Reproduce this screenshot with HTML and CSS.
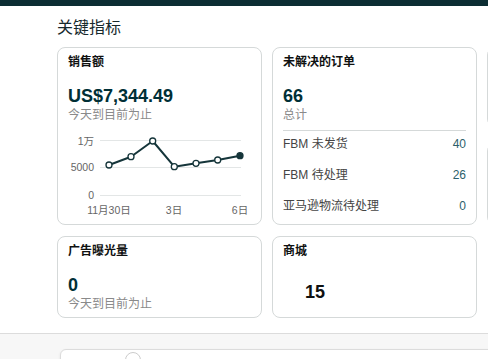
FILE: index.html
```html
<!DOCTYPE html>
<html lang="zh-CN">
<head>
    <meta charset="UTF-8">
    <meta name="viewport" content="width=device-width, initial-scale=1.0">
    <title>关键指标</title>
    <link rel="stylesheet" href="styles.css">
</head>
<body>
    <div class="topbar"></div>

    <section class="metrics">
        <h2 class="metrics-title">关键指标</h2>

        <div class="grid">
            <div class="card">
                <div class="card-title">销售额</div>
                <div class="value">US$7,344.49</div>
                <div class="sub">今天到目前为止</div>
                <svg class="chart" width="183" height="88" viewBox="-1 0 183 88">
                    <line class="grid-line" x1="31" y1="10.5" x2="172" y2="10.5"/>
                    <line class="grid-line" x1="31" y1="37.5" x2="172" y2="37.5"/>
                    <line class="grid-line" x1="31" y1="65.5" x2="172" y2="65.5"/>
                    <text class="axis" x="25" y="15" text-anchor="end">1万</text>
                    <text class="axis" x="25" y="41" text-anchor="end">5000</text>
                    <text class="axis" x="25" y="69" text-anchor="end">0</text>
                    <text class="axis" x="40" y="84" text-anchor="middle">11月30日</text>
                    <text class="axis" x="105" y="84" text-anchor="middle">3日</text>
                    <text class="axis" x="171" y="84" text-anchor="middle">6日</text>
                    <polyline class="line" points="40,35 62,26.7 83.7,11 105.3,36.7 127,33.3 148.7,30 171,25.7"/>
                    <circle class="dot" cx="40" cy="35" r="3"/>
                    <circle class="dot" cx="62" cy="26.7" r="3"/>
                    <circle class="dot" cx="83.7" cy="11" r="3"/>
                    <circle class="dot" cx="105.3" cy="36.7" r="3"/>
                    <circle class="dot" cx="127" cy="33.3" r="3"/>
                    <circle class="dot" cx="148.7" cy="30" r="3"/>
                    <circle class="dot last" cx="171" cy="25.7" r="3"/>
                </svg>
            </div>

            <div class="card">
                <div class="card-title">未解决的订单</div>
                <div class="value">66</div>
                <div class="sub">总计</div>
                <div class="divider"></div>
                <div class="rows">
                    <div class="row"><span>FBM 未发货</span><span class="num">40</span></div>
                    <div class="row"><span>FBM 待处理</span><span class="num">26</span></div>
                    <div class="row"><span>亚马逊物流待处理</span><span class="num">0</span></div>
                </div>
            </div>

            <div class="stack">
                <div class="card small"></div>
                <div class="card small2"></div>
            </div>

            <div class="card">
                <div class="card-title">广告曝光量</div>
                <div class="value">0</div>
                <div class="sub">今天到目前为止</div>
            </div>

            <div class="card">
                <div class="card-title">商城</div>
                <div class="value store">15</div>
            </div>
        </div>
    </section>

    <div class="footer">
        <div class="footer-card">
            <span class="footer-dot"></span>
        </div>
    </div>
</body>
</html>
```

FILE: styles.css
```css
html, body {
    overflow: hidden;
}

body {
    margin: 0;
    background: #fff;
    font-family: "Liberation Sans", "Noto Sans CJK SC", sans-serif;
    color: #0f1111;
}

.topbar {
    height: 6px;
    background: #0c2d33;
}

.metrics {
    padding: 0 0 15px 57px;
}

.metrics-title {
    margin: 11px 0 8px;
    font-size: 16px;
    line-height: 22px;
    font-weight: normal;
    color: #16282c;
}

.grid {
    display: grid;
    grid-template-columns: 205px 205px 205px;
    grid-template-rows: 178px 82px;
    column-gap: 10px;
    row-gap: 11px;
}

.card {
    box-sizing: border-box;
    border: 1px solid #d5d9d9;
    border-radius: 8px;
    padding: 6px 10px;
    background: #fff;
}

.card-title {
    font-size: 12px;
    line-height: 16px;
    font-weight: bold;
}

.value {
    margin-top: 15px;
    font-size: 18px;
    line-height: 22px;
    font-weight: bold;
    color: #002f36;
}

.value.store {
    margin-top: 22px;
    padding-left: 22px;
    color: #0f1111;
}

.sub {
    font-size: 12px;
    line-height: 16px;
    color: #8a8a8a;
}

.chart {
    display: block;
    margin-top: 7px;
}

.grid-line {
    stroke: #e3e6e6;
    stroke-width: 1;
}

.axis {
    font-size: 10.5px;
    fill: #666;
    font-family: "Liberation Sans", "Noto Sans CJK SC", sans-serif;
}

.line {
    fill: none;
    stroke: #15353a;
    stroke-width: 2;
    stroke-linejoin: round;
}

.dot {
    fill: #fff;
    stroke: #15353a;
    stroke-width: 1.3;
}

.dot.last {
    fill: #15353a;
}

.divider {
    margin-top: 7px;
    height: 1px;
    background: #d5d9d9;
}

.rows {
    display: flex;
    flex-direction: column;
    gap: 15px;
    margin-top: 5px;
}

.row {
    display: flex;
    justify-content: space-between;
    font-size: 12px;
    line-height: 16px;
    color: #444;
}

.row .num {
    color: #2c5f6b;
}

.stack {
    display: flex;
    flex-direction: column;
    gap: 16px;
}

.stack .small {
    height: 80px;
}

.stack .small2 {
    height: 82px;
}

.footer {
    border-top: 1px solid #dcdcdc;
    background: #f7f7f7;
    padding: 15px 0 0 60px;
    height: 60px;
}

.footer-card {
    position: relative;
    width: 600px;
    height: 60px;
    border: 1px solid #dcdcdc;
    border-radius: 6px;
    background: #fff;
    box-shadow: 0 1px 3px rgba(0, 0, 0, 0.08);
}

.footer-dot {
    position: absolute;
    left: 64px;
    top: 2px;
    width: 14px;
    height: 14px;
    border: 1px solid #ccc;
    border-radius: 50%;
}
```
